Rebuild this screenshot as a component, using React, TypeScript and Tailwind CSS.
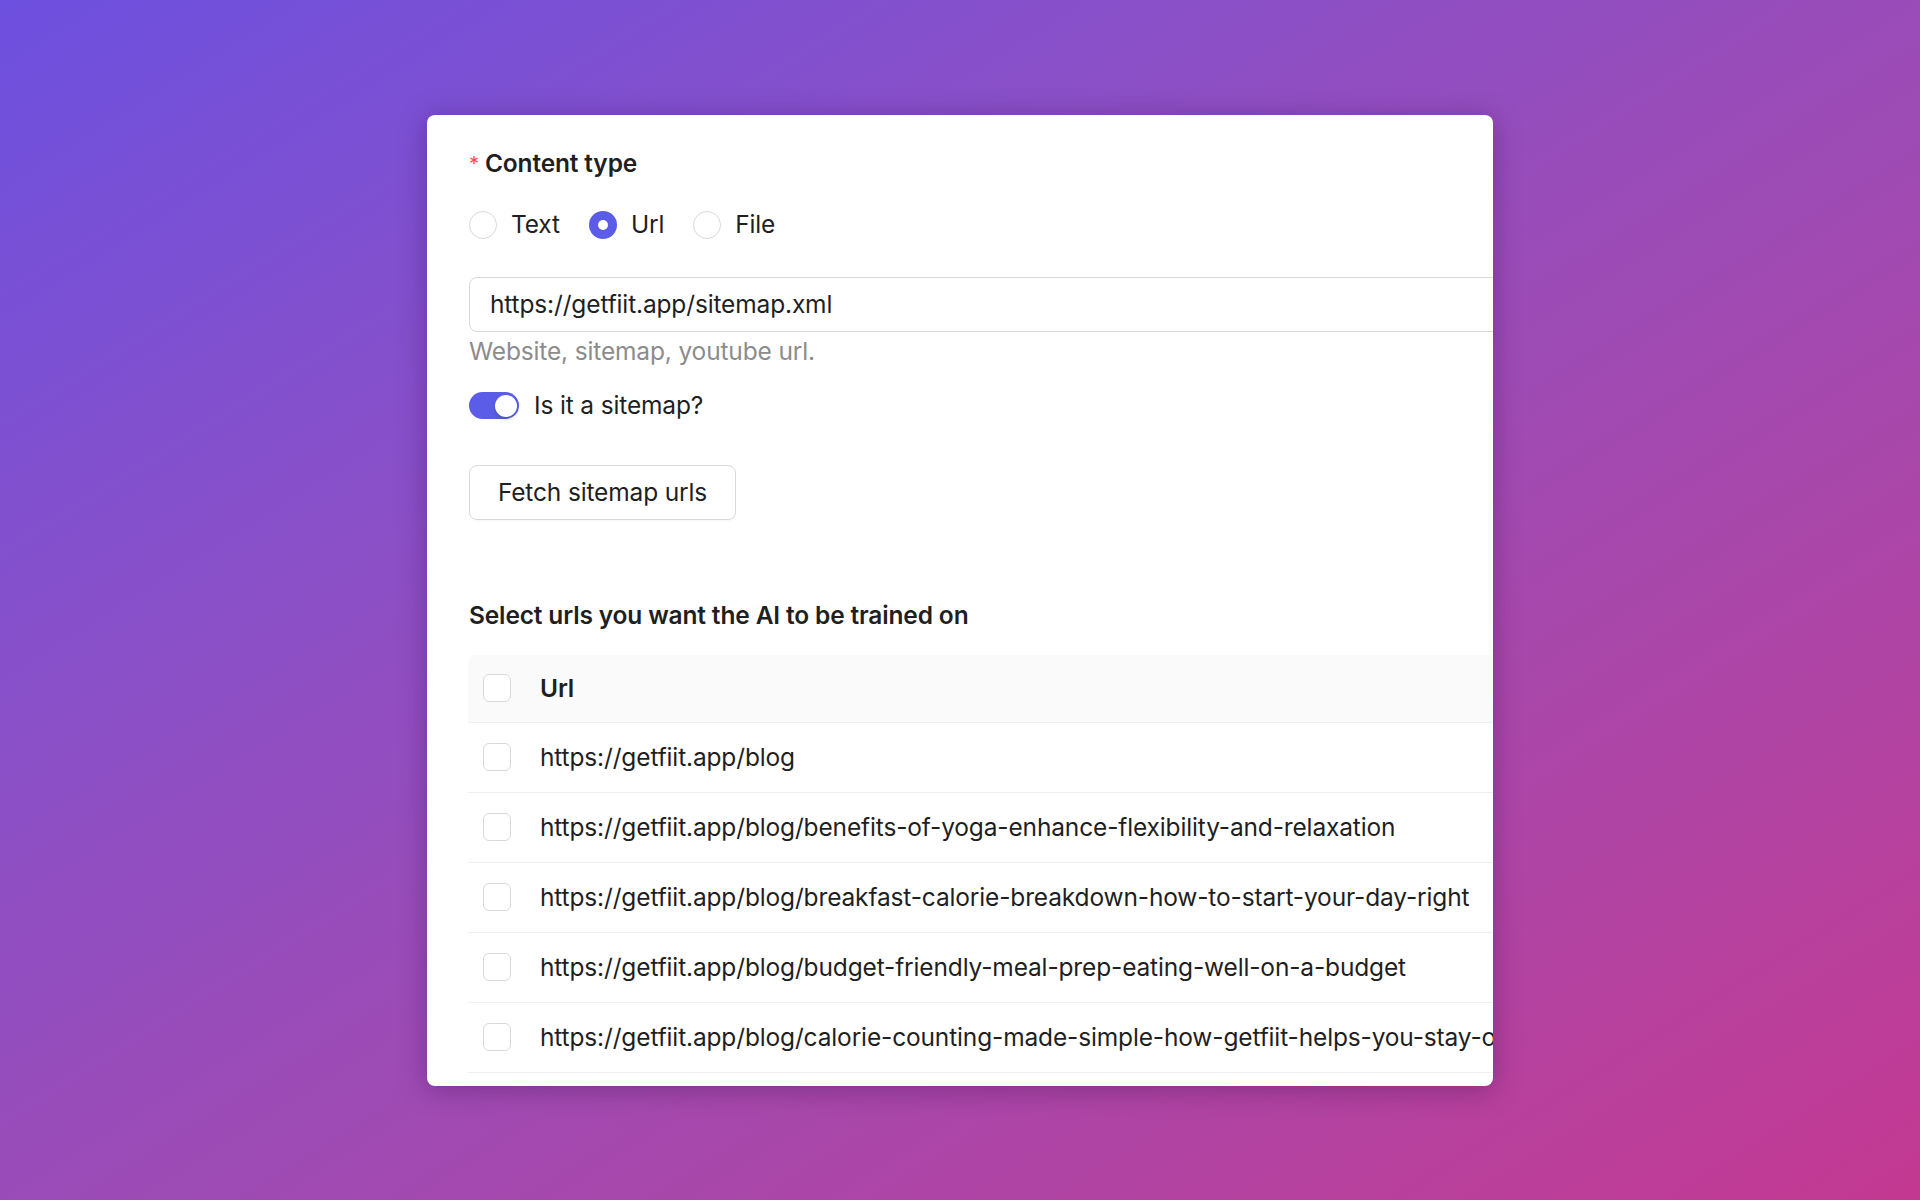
import { useState } from "react";

const urls = [
  "https://getfiit.app/blog",
  "https://getfiit.app/blog/benefits-of-yoga-enhance-flexibility-and-relaxation",
  "https://getfiit.app/blog/breakfast-calorie-breakdown-how-to-start-your-day-right",
  "https://getfiit.app/blog/budget-friendly-meal-prep-eating-well-on-a-budget",
  "https://getfiit.app/blog/calorie-counting-made-simple-how-getfiit-helps-you-stay-on-track",
  "https://getfiit.app/blog/clean-eating-made-easy-simple-tips-for-beginners",
];

const Radio = ({ label, checked }: { label: string; checked?: boolean }) => (
  <label className="flex items-center gap-[14px] cursor-pointer">
    {checked ? (
      <span className="w-7 h-7 rounded-full bg-[#5b5de8] flex items-center justify-center">
        <span className="w-[10px] h-[10px] rounded-full bg-white" />
      </span>
    ) : (
      <span className="w-7 h-7 rounded-full border-[1.5px] border-[#d9d9d9] bg-white" />
    )}
    <span>{label}</span>
  </label>
);

const Checkbox = () => (
  <span className="block w-7 h-7 rounded-md border-[1.5px] border-[#d9d9d9] bg-white" />
);

export default function App() {
  const [sitemap] = useState(true);

  return (
    <div className="w-[1920px] h-[1200px] flex items-center justify-center bg-gradient-to-br from-[#6d50df] to-[#c33891] font-['Inter','Liberation_Sans',sans-serif] text-[24.5px] tracking-[-0.15px] text-[#1f1f1f]">
      <div className="w-[1066px] h-[971px] bg-white rounded-lg overflow-hidden shadow-[0_4px_28px_rgba(50,10,70,0.35)] pl-[42px] pt-[31px]">
        <div className="w-[1300px]">
          <div className="h-9 flex items-center font-semibold">
            <span className="text-[#ff4d4f] text-[20px] mr-[6px] font-normal">*</span>
            Content type
          </div>

          <div className="h-9 mt-[25px] flex items-center gap-[29px]">
            <Radio label="Text" />
            <Radio label="Url" checked />
            <Radio label="File" />
          </div>

          <div className="mt-[34px] h-[55px] w-[1200px] border-[1.5px] border-[#d9d9d9] rounded-lg flex items-center px-5">
            https://getfiit.app/sitemap.xml
          </div>
          <div className="h-[30px] mt-[5px] flex items-center text-[#8c8c8c]">
            Website, sitemap, youtube url.
          </div>

          <div className="h-9 mt-[21px] flex items-center gap-[15px]">
            <span
              className={`w-[50px] h-[27px] rounded-full p-[2.5px] flex items-center ${
                sitemap ? "bg-[#5b5de8] justify-end" : "bg-[#bfbfbf] justify-start"
              }`}
            >
              <span className="w-[22px] h-[22px] rounded-full bg-white shadow-[0_2px_4px_rgba(0,35,11,0.2)]" />
            </span>
            <span>Is it a sitemap?</span>
          </div>

          <button className="mt-[41px] h-[55px] w-[267px] border-[1.5px] border-[#d9d9d9] rounded-lg bg-white shadow-[0_2px_0_rgba(0,0,0,0.02)] flex items-center justify-center">
            Fetch sitemap urls
          </button>

          <div className="h-9 mt-[78px] flex items-center font-semibold">
            Select urls you want the AI to be trained on
          </div>

          <div className="mt-[21px] -ml-px w-[1250px]">
            <div className="h-[68px] bg-[#fafafa] rounded-t-lg border-b border-[#f0f0f0] flex items-center pl-[15px]">
              <Checkbox />
              <span className="ml-[29px] font-semibold">Url</span>
            </div>
            {urls.map((url) => (
              <div
                key={url}
                className="h-[70px] border-b border-[#f0f0f0] flex items-center pl-[15px] whitespace-nowrap"
              >
                <Checkbox />
                <span className="ml-[29px]">{url}</span>
              </div>
            ))}
          </div>
        </div>
      </div>
    </div>
  );
}
